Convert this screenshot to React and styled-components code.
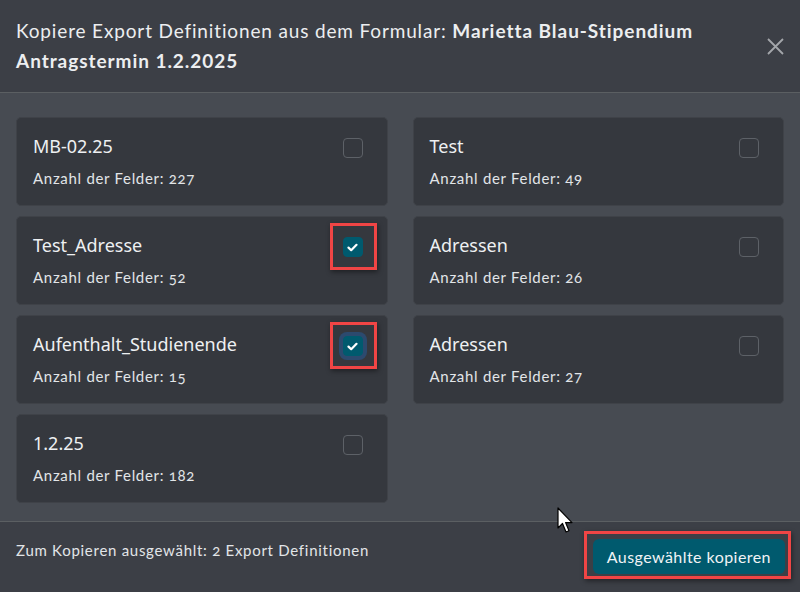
import React from 'react';
import styled, { createGlobalStyle } from 'styled-components';

const GlobalStyle = createGlobalStyle`
	html, body {
		margin: 0;
		padding: 0;
		background: #3c3f46;
	}
	* {
		box-sizing: border-box;
	}
`;

const Modal = styled.div`
	position: relative;
	display: flex;
	flex-direction: column;
	width: 800px;
	height: 592px;
	overflow: hidden;
	font-family: Lato, 'Open Sans', sans-serif;
	color: #e9ecef;
`;

const Header = styled.header`
	display: flex;
	justify-content: space-between;
	align-items: flex-start;
	height: 93px;
	padding: 16px 16px 0 16px;
	background: #3c3f46;
	border-bottom: 1px solid #5b5f62;
`;

const Title = styled.h5`
	margin: 0;
	max-width: 710px;
	font-size: 19px;
	font-weight: 400;
	line-height: 30px;
	letter-spacing: 0.85px;
	color: #eceef0;

	strong {
		font-weight: 700;
		letter-spacing: 0.95px;
	}
`;

const Close = styled.button`
	margin: 22px 0 0 0;
	padding: 0;
	border: none;
	background: none;
	color: #a3a6aa;
	cursor: pointer;
	line-height: 0;
`;

const Body = styled.div`
	flex: 1;
	display: grid;
	grid-template-columns: 1fr 1fr;
	grid-auto-rows: 89px;
	align-content: start;
	gap: 10px 25px;
	padding: 24px 16px 0 16px;
	background: #474b52;
`;

const Card = styled.div`
	position: relative;
	display: flex;
	justify-content: space-between;
	padding: 14px 24px 0 16px;
	background: #35383e;
	border: 1px solid #3f4248;
	border-radius: 5px;
`;

const CardText = styled.div`
	display: flex;
	flex-direction: column;
`;

const CardTitle = styled.div`
	font-family: 'Noto Sans', 'Open Sans', sans-serif;
	font-size: 18px;
	line-height: 28px;
	color: #eef0f2;
`;

const CardMeta = styled.div`
	margin-top: 8px;
	font-size: 15px;
	line-height: 20px;
	letter-spacing: 0.7px;
	color: #e2e5e8;
	font-variant-numeric: oldstyle-nums;
`;

const CheckWrap = styled.div`
	position: relative;
	width: 20px;
	height: 20px;
	margin-top: 6px;
`;

const Box = styled.span`
	display: flex;
	align-items: center;
	justify-content: center;
	width: 20px;
	height: 20px;
	border-radius: 4px;
	border: 1px solid ${(p) => (p.$checked ? '#005a6e' : '#5d6167')};
	background: ${(p) => (p.$checked ? '#005a6e' : 'transparent')};
	box-shadow: ${(p) => (p.$focus ? '0 0 0 4px #2c4a6e' : 'none')};
`;

const Highlight = styled.span`
	position: absolute;
	inset: ${(p) => p.$inset};
	border: 3px solid #f04545;
	box-shadow: 1px 2px 5px rgba(0, 0, 0, 0.45);
	pointer-events: none;
`;

const Footer = styled.footer`
	display: flex;
	justify-content: space-between;
	align-items: center;
	height: 71px;
	padding: 0 15px 0 16px;
	background: #3c3f46;
	border-top: 1px solid #5b5f62;
`;

const FooterText = styled.span`
	margin-top: -15px;
	font-size: 15px;
	letter-spacing: 0.72px;
	color: #e2e5e8;
	font-variant-numeric: oldstyle-nums;
`;

const ButtonWrap = styled.div`
	position: relative;
	margin-top: -1px;
`;

const Button = styled.button`
	height: 35px;
	padding: 0 14px;
	border: none;
	border-radius: 6px;
	background: #005a6e;
	color: #f1f3f5;
	font-family: Lato, 'Open Sans', sans-serif;
	font-size: 16px;
	letter-spacing: 0.45px;
	cursor: pointer;
`;

const Cursor = styled.svg`
	position: absolute;
	left: 557px;
	top: 507px;
`;

const definitions = [
	{ name: 'MB-02.25', count: 227 },
	{ name: 'Test', count: 49 },
	{ name: 'Test_Adresse', count: 52, checked: true },
	{ name: 'Adressen', count: 26 },
	{ name: 'Aufenthalt_Studienende', count: 15, checked: true, focus: true },
	{ name: 'Adressen', count: 27 },
	{ name: '1.2.25', count: 182 },
];

const Check = () => (
	<svg width="11" height="9" viewBox="0 0 11 9">
		<path d="M1.5 4.6 L4.2 7.2 L9.5 1.8" fill="none" stroke="#fff" strokeWidth="2.2" strokeLinecap="round" strokeLinejoin="round" />
	</svg>
);

const App = () => {
	const selected = definitions.filter((d) => d.checked).length;

	return (
		<Modal>
			<GlobalStyle />
			<Header>
				<Title>
					Kopiere Export Definitionen aus dem Formular: <strong>Marietta Blau-Stipendium Antragstermin 1.2.2025</strong>
				</Title>
				<Close aria-label="Schließen">
					<svg width="17" height="17" viewBox="0 0 17 17">
						<path d="M1 1 L16 16 M16 1 L1 16" stroke="currentColor" strokeWidth="1.8" />
					</svg>
				</Close>
			</Header>

			<Body>
				{definitions.map((d, i) => (
					<Card key={i}>
						<CardText>
							<CardTitle>{d.name}</CardTitle>
							<CardMeta>Anzahl der Felder: {d.count}</CardMeta>
						</CardText>
						<CheckWrap>
							<Box $checked={d.checked} $focus={d.focus}>
								{d.checked && <Check />}
							</Box>
							{d.checked && <Highlight $inset="-14px -14px -13px -13px" />}
						</CheckWrap>
					</Card>
				))}
			</Body>

			<Footer>
				<FooterText>Zum Kopieren ausgewählt: {selected} Export Definitionen</FooterText>
				<ButtonWrap>
					<Button>Ausgewählte kopieren</Button>
					<Highlight $inset="-8px -6px -5px -9px" />
				</ButtonWrap>
			</Footer>

			<Cursor width="18" height="28" viewBox="0 0 18 28">
				<path d="M1 1 L1 21 L5.5 16.5 L9 25 L12 23.8 L8.6 15.6 L15 15.6 Z" fill="#fff" stroke="#000" strokeWidth="1.2" strokeLinejoin="round" />
			</Cursor>
		</Modal>
	);
};

export default App;
